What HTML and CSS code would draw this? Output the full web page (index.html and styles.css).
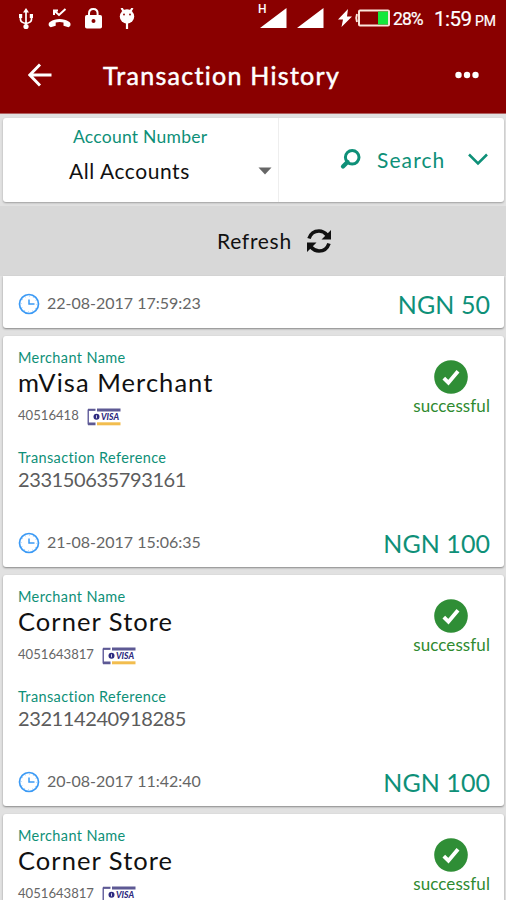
FILE: index.html
```
<!DOCTYPE html>
<html lang="en">
<head>
<meta charset="utf-8">
<title>Transaction History</title>
<link rel="stylesheet" href="styles.css">
</head>
<body>
<svg class="defs" aria-hidden="true">
  <symbol id="clock" viewBox="0 0 22 22">
    <circle cx="11" cy="11" r="9.5" fill="none" stroke="#3b9af5" stroke-width="1.7"/>
    <circle cx="11" cy="11" r="7.9" fill="none" stroke="#8cc3f8" stroke-width="1" stroke-dasharray="1 3.1"/>
    <path d="M11 6.500v4.500h5.500" fill="none" stroke="#3b9af5" stroke-width="1.5"/>
  </symbol>
  <symbol id="check" viewBox="0 0 34 34">
    <circle cx="17" cy="17" r="16.8" fill="#2f8e36"/>
    <path d="M9.8 18.2l4.6 4.5L24 11.2" fill="none" stroke="#fff" stroke-width="3.8"/>
  </symbol>
  <symbol id="visa" viewBox="0 0 34 18">
    <path d="M8 2H1.200v14H8" fill="none" stroke="#45408a" stroke-width="1.200"/>
    <path d="M1 14.500h7.500v2.700H1zM1 .8h7.500v2H1zM10 .5h23.500v3H10z" fill="#5d5994"/>
    <path d="M10 14.300h23.500v3H10z" fill="#f2bd4e"/>
    <circle cx="9.500" cy="8.800" r="3" fill="#2e2a80"/>
    <path d="M9.500 7.300v3" stroke="#fff" stroke-width=".8"/>
    <text x="14" y="12.200" textLength="18" lengthAdjust="spacingAndGlyphs" class="visa-word">VISA</text>
  </symbol>
</svg>

<header class="top">
  <div class="status">
    <svg class="status-left" width="120" height="26" viewBox="0 0 120 26">
      <g fill="none" stroke="#fff" stroke-width="1.700">
        <path d="M9 4v17M3.500 8v3.500q0 3 5.500 4M14.500 8v3.500q0 3-5.500 4"/>
      </g>
      <g fill="#fff">
        <path d="M9 0l3 4.500H6zM2 6h3.200v4H2zM12.800 6H16v4h-3.200z"/>
        <circle cx="9" cy="18.500" r="2.600"/>
        <path d="M32 18c-.8-1.800-.3-3.300 1.200-4.300 5.300-3.500 13.500-3.500 18.800 0 1.500 1 2 2.500 1.200 4.300l-1.700 1.200-5-1.500v-3.200q-3.900-1.200-7.800 0v3.200l-5 1.500z"/>
      </g>
      <path d="M37 7V2.500h4M37 2.500l5 4.500L48.500 1" fill="none" stroke="#fff" stroke-width="2"/>
      <path d="M72 8V5.500q0-4.500 4.300-4.500t4.300 4.500V8" fill="none" stroke="#fff" stroke-width="2"/>
      <rect x="68" y="7" width="17" height="13.500" rx="1.800" fill="#fff"/>
      <circle cx="76.500" cy="13" r="2" fill="#8a0000"/>
      <circle cx="110" cy="8.500" r="7.200" fill="#fff"/>
      <path d="M104.500 0l2.500 4M115.500 0L113 4M110 15v6" stroke="#fff" stroke-width="2.200"/>
      <circle cx="107" cy="6.500" r=".9" fill="#8a0000"/><circle cx="113" cy="6.500" r=".9" fill="#8a0000"/>
    </svg>
    <div class="status-right">
      <span class="net">H</span>
      <svg class="signals" width="64" height="22" viewBox="0 0 64 22"><path d="M0 20L26.500 0v20zM37 20L63.500 0v20z" fill="#fff"/></svg>
      <svg class="battery" width="52" height="20" viewBox="0 0 52 20">
        <path d="M10 1L0 11.500h5L3.500 19 14 8.500H9z" fill="#fff"/>
        <rect x="21" y="2.500" width="30" height="15" rx="1" fill="none" stroke="#fbe6dc" stroke-width="2"/>
        <path d="M19 6q-1.500 4 0 8" fill="none" stroke="#fbe6dc" stroke-width="2"/>
        <path d="M40 3.500h10v13H40z" fill="#16e83c"/>
      </svg>
      <span class="percent">28%</span>
      <span class="time">1:59</span>
      <span class="pm">PM</span>
    </div>
  </div>
  <div class="bar">
    <svg class="back" width="24" height="24" viewBox="0 0 24 24"><path d="M23.500 12H2M12 1.500L1.800 12 12 22.500" fill="none" stroke="#fff" stroke-width="2.900"/></svg>
    <h1 class="title">Transaction History</h1>
    <svg class="more" width="24" height="8" viewBox="0 0 24 8"><g fill="#fff"><circle cx="3.500" cy="4" r="3.200"/><circle cx="12" cy="4" r="3.200"/><circle cx="20.500" cy="4" r="3.200"/></g></svg>
  </div>
</header>

<section class="filter">
  <div class="account">
    <div class="account-label">Account Number</div>
    <div class="account-value">All Accounts</div>
    <svg class="caret" width="14" height="8" viewBox="0 0 14 8"><path d="M.5.5h13L7 7.500z" fill="#666"/></svg>
  </div>
  <div class="search">
    <svg width="21" height="21" viewBox="0 0 21 21"><circle cx="12.200" cy="8.300" r="6.800" fill="none" stroke="#0e9078" stroke-width="3"/><path d="M7.500 13L3 17.500" stroke="#0e9078" stroke-width="4.200" stroke-linecap="round"/></svg>
    <span class="search-word">Search</span>
    <svg class="chevron" width="20" height="13" viewBox="0 0 20 13"><path d="M1 1.500l9 9 9-9" fill="none" stroke="#0e9078" stroke-width="2.500"/></svg>
  </div>
</section>

<div class="refresh">
  <span class="refresh-word">Refresh</span>
  <svg width="26" height="26" viewBox="0 0 26 26">
    <path d="M3 10.500Q5.500 3 13 3q4.500 0 8 4M23 15.500Q20.500 23 13 23q-4.500 0-8-4" fill="none" stroke="#111" stroke-width="3.600"/>
    <path d="M25 2v9.500h-9.500zM1 24v-9.500h9.500z" fill="#111"/>
  </svg>
</div>

<main>
  <article class="card short">
    <div class="foot"><svg class="clock"><use href="#clock"/></svg><time class="date">22-08-2017 17:59:23</time><span class="amount">NGN 50</span></div>
  </article>

  <article class="card">
    <div class="body">
      <div>
        <div class="label">Merchant Name</div>
        <div class="name">mVisa Merchant</div>
        <div class="id"><span>40516418</span><svg class="visa"><use href="#visa"/></svg></div>
        <div class="label ref-label">Transaction Reference</div>
        <div class="ref">233150635793161</div>
      </div>
      <div class="state"><svg class="check"><use href="#check"/></svg><span>successful</span></div>
    </div>
    <div class="foot"><svg class="clock"><use href="#clock"/></svg><time class="date">21-08-2017 15:06:35</time><span class="amount">NGN 100</span></div>
  </article>

  <article class="card">
    <div class="body">
      <div>
        <div class="label">Merchant Name</div>
        <div class="name">Corner Store</div>
        <div class="id"><span>4051643817</span><svg class="visa"><use href="#visa"/></svg></div>
        <div class="label ref-label">Transaction Reference</div>
        <div class="ref">232114240918285</div>
      </div>
      <div class="state"><svg class="check"><use href="#check"/></svg><span>successful</span></div>
    </div>
    <div class="foot"><svg class="clock"><use href="#clock"/></svg><time class="date">20-08-2017 11:42:40</time><span class="amount">NGN 100</span></div>
  </article>

  <article class="card last">
    <div class="body">
      <div>
        <div class="label">Merchant Name</div>
        <div class="name">Corner Store</div>
        <div class="id"><span>4051643817</span><svg class="visa"><use href="#visa"/></svg></div>
      </div>
      <div class="state"><svg class="check"><use href="#check"/></svg><span>successful</span></div>
    </div>
  </article>
</main>
</body>
</html>
```
FILE: styles.css
```
* { box-sizing: border-box; }

body {
  margin: 0;
  height: 900px;
  overflow: hidden;
  background: #e1e1e1;
  font-family: Lato, "Liberation Sans", sans-serif;
  color: #111;
}

svg { display: block; flex: none; }
.defs { display: none; }
.visa-word { font: italic 900 9px Lato, sans-serif; fill: #2e2a80; }

.top { height: 114px; background: #8a0000; border-bottom: 1px solid #b06060; color: #fff; }

.status { display: flex; justify-content: space-between; height: 38px; padding: 8px 10px 0 17px; }
.status-right { display: flex; align-items: flex-start; font-family: Roboto, sans-serif; white-space: nowrap; }
.net { width: 2px; margin: -5px 0 0 4px; font-size: 12px; line-height: 12px; font-weight: 500; }
.signals { margin-right: 14px; }
.battery { margin-right: 3px; }
.percent { width: 41px; font-size: 17.500px; line-height: 22px; letter-spacing: -.9px; -webkit-text-stroke: .2px #fff; }
.time { width: 41px; font-size: 20.500px; line-height: 23px; letter-spacing: -.5px; -webkit-text-stroke: .2px #fff; }
.pm { width: 21px; font-size: 14px; line-height: 26px; letter-spacing: -.2px; -webkit-text-stroke: .2px #fff; }

.bar { display: flex; align-items: center; height: 74px; padding: 0 27px 0 28px; }
.title { flex: 1; margin: 0 0 0 51px; font-size: 25px; line-height: 30px; font-weight: 400; letter-spacing: 1.280px; -webkit-text-stroke: .5px #fff; }

.filter {
  display: grid;
  grid-template-columns: 276px 1fr;
  height: 84px;
  margin: 4px 2px 4px 3px;
  background: #fff;
  border-radius: 3px;
  box-shadow: 0 1px 2px rgba(0, 0, 0, .3);
}
.account {
  display: grid;
  grid-template-columns: 1fr 14px;
  grid-template-rows: 24px 44px;
  align-items: center;
  padding: 7px 6px 0 66px;
  border-right: 1px solid #eee;
}
.account-label { grid-column: 1 / 3; padding-left: 4px; font-size: 17.500px; line-height: 24px; letter-spacing: .25px; color: #0e9078; }
.account-value { font-size: 21px; line-height: 26px; letter-spacing: .55px; }
.search { display: flex; align-items: center; padding: 0 0 2px 61px; }
.search-word { width: 91px; margin-left: 16px; font-size: 21px; letter-spacing: 1.100px; color: #0e9078; }

.refresh { display: flex; align-items: center; gap: 15px; height: 70px; padding: 0 0 1px 217px; background: #d8d8d8; }
.refresh-word { width: 74px; font-size: 21px; letter-spacing: .7px; white-space: nowrap; }

main { display: flex; flex-direction: column; gap: 8px; }
.card {
  display: flex;
  flex: none;
  flex-direction: column;
  justify-content: space-between;
  height: 231px;
  margin: 0 2px 0 3px;
  padding: 13px 14px 9px 15px;
  background: #fff;
  border-radius: 3px;
  box-shadow: 0 1px 2px rgba(0, 0, 0, .4);
}
.card.short { height: 52px; padding-top: 13px; border-radius: 0 0 3px 3px; }
.card.last { height: 86px; overflow: hidden; border-radius: 3px 3px 0 0; }
.body { display: flex; justify-content: space-between; }
.label { font-size: 14.500px; line-height: 18px; letter-spacing: .38px; color: #0e9078; }
.name { font-size: 25.500px; line-height: 30px; letter-spacing: 1.050px; }
.id { display: flex; align-items: center; gap: 8px; margin-top: 9px; font-size: 13.100px; line-height: 18px; color: #666; }
.visa { width: 34px; height: 18px; margin-top: 2px; margin-bottom: -2px; }
.ref-label { margin-top: 25px; }
.ref { font-size: 20px; line-height: 24px; letter-spacing: -.4px; color: #5c5c5c; }
.state { display: flex; flex-direction: column; align-items: center; margin-top: 11px; font-size: 17px; line-height: 20px; letter-spacing: .08px; color: #2f8a2f; }
.check { width: 34px; height: 34px; margin: 0 1px 2px 0; }
.foot { display: flex; align-items: center; height: 30px; }
.clock { width: 22px; height: 22px; }
.date { margin: -2px 0 0 7px; font-size: 16px; line-height: 20px; color: #666; }
.amount { margin-left: auto; font-size: 25px; line-height: 30px; letter-spacing: .05px; color: #0e9078; }
```
